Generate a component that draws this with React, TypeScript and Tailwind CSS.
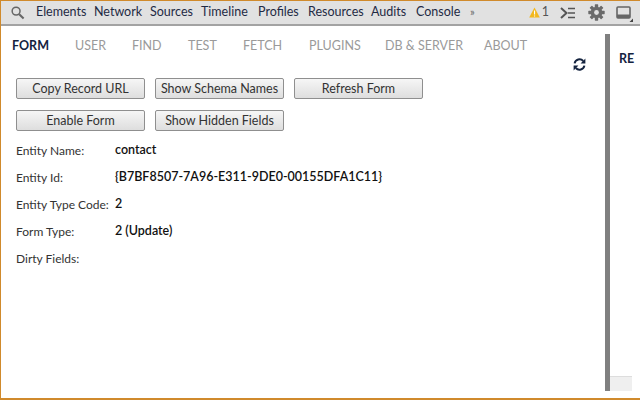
import { useState } from "react";

const navItems = [
  { label: "Elements", width: "w-[58px]" },
  { label: "Network", width: "w-[56px]" },
  { label: "Sources", width: "w-[51px]" },
  { label: "Timeline", width: "w-[57px]" },
  { label: "Profiles", width: "w-[50px]" },
  { label: "Resources", width: "w-[63px]" },
  { label: "Audits", width: "w-[45px]" },
  { label: "Console", width: "w-[54px]" },
];

const tabs = [
  { label: "FORM", width: "w-[63px]" },
  { label: "USER", width: "w-[57px]" },
  { label: "FIND", width: "w-[56px]" },
  { label: "TEST", width: "w-[55px]" },
  { label: "FETCH", width: "w-[66px]" },
  { label: "PLUGINS", width: "w-[76px]" },
  { label: "DB & SERVER", width: "w-[99px]" },
  { label: "ABOUT", width: "w-[60px]" },
];

const fields = [
  { label: "Entity Name:", value: "contact" },
  { label: "Entity Id:", value: "{B7BF8507-7A96-E311-9DE0-00155DFA1C11}" },
  { label: "Entity Type Code:", value: "2" },
  { label: "Form Type:", value: "2 (Update)" },
  { label: "Dirty Fields:", value: "" },
];

function FormButton({ children }: { children: string }) {
  return (
    <button className="h-[21px] w-[129px] rounded-[2px] border border-[#8f8f8f] bg-gradient-to-b from-[#f6f6f6] to-[#dedede] text-center text-[12.5px] leading-[19px] text-[#333]">
      {children}
    </button>
  );
}

function SearchIcon() {
  return (
    <svg width="15" height="15" viewBox="0 0 16 16" fill="none" stroke="#666" className="shrink-0">
      <circle cx="6.5" cy="6.5" r="4.2" strokeWidth="1.6" />
      <path d="M9.8 9.8 14.5 14.5" strokeWidth="2.2" />
    </svg>
  );
}

function WarningIcon() {
  return (
    <svg width="11" height="11" viewBox="0 0 11 11" className="shrink-0">
      <path d="M5.5.5 10.8 10.5H.2Z" fill="#f2b81f" />
      <path d="M5 3.5h1.1v4H5ZM5 8.4h1.1v1.2H5Z" fill="#fff" />
    </svg>
  );
}

function DrawerIcon() {
  return (
    <svg width="16" height="12" viewBox="0 0 16 12" fill="none" stroke="#555" className="shrink-0">
      <path d="M1 1 6.5 6 1 11" strokeWidth="2" />
      <path d="M8 1.5h7M8 6h7M8 10.5h7" strokeWidth="1.6" />
    </svg>
  );
}

function GearIcon() {
  return (
    <svg width="17" height="17" viewBox="0 0 17 17" className="shrink-0">
      <g fill="#6a6a6a">
        <circle cx="8.5" cy="8.5" r="5.8" />
        <rect x="6.8" y="0.3" width="3.4" height="16.4" rx="0.6" />
        <rect x="6.8" y="0.3" width="3.4" height="16.4" rx="0.6" transform="rotate(45 8.5 8.5)" />
        <rect x="6.8" y="0.3" width="3.4" height="16.4" rx="0.6" transform="rotate(90 8.5 8.5)" />
        <rect x="6.8" y="0.3" width="3.4" height="16.4" rx="0.6" transform="rotate(135 8.5 8.5)" />
      </g>
      <circle cx="8.5" cy="8.5" r="2.4" fill="#e0e0e0" />
    </svg>
  );
}

function DockIcon() {
  return (
    <svg width="17" height="18" viewBox="0 0 17 18" className="shrink-0">
      <rect x="1" y="3" width="13" height="11" rx="1" fill="none" stroke="#666" strokeWidth="1.6" />
      <rect x="1" y="10.5" width="13" height="3.5" fill="#666" />
      <path d="M17 14.5V18H13.5Z" fill="#444" />
    </svg>
  );
}

function RefreshIcon() {
  return (
    <svg width="13" height="13" viewBox="0 0 13 13" fill="none" className="shrink-0">
      <path d="M1.6 5.4A5 5 0 0 1 10.2 3" stroke="#14233f" strokeWidth="2" />
      <path d="M11.4 7.6A5 5 0 0 1 2.8 10" stroke="#14233f" strokeWidth="2" />
      <path d="M12.4 .6V5.4H7.6Z" fill="#14233f" />
      <path d="M.6 12.4V7.6H5.4Z" fill="#14233f" />
    </svg>
  );
}

export default function App() {
  const [active] = useState("FORM");

  return (
    <div className="flex h-[400px] w-[640px] flex-col overflow-hidden border-t border-b-2 border-l border-[#d08a2c] bg-white font-['Lato','Noto_Sans',sans-serif] text-[12.5px] text-[#222]">
      <div className="flex h-[25px] shrink-0 items-center border-b-2 border-[#a3a3a3] bg-[#e1e1e1] pl-[9px]">
        <SearchIcon />
        <div className="ml-[11px] flex items-center text-[12.5px] text-[#1f2a44]">
          {navItems.map((item) => (
            <span key={item.label} className={item.width}>{item.label}</span>
          ))}
        </div>
        <span className="text-[11px] text-[#666]">»</span>
        <div className="ml-[54px]"><WarningIcon /></div>
        <span className="ml-[2px] text-[12.5px] text-[#555]">1</span>
        <div className="ml-[11px]"><DrawerIcon /></div>
        <div className="ml-[12px]"><GearIcon /></div>
        <div className="ml-[11px]"><DockIcon /></div>
      </div>

      <div className="flex min-h-0 flex-1 pb-[7px] pt-[8px]">
        <div className="flex w-[604px] flex-col pl-[11px]">
          <div className="flex h-[24px] items-center">
            {tabs.map((tab) => (
              <span
                key={tab.label}
                className={`${tab.width} text-[12.5px] ${tab.label === active ? "font-bold text-[#14233f]" : "text-[#9a9a9a]"}`}
              >
                {tab.label}
              </span>
            ))}
          </div>
          <div className="flex justify-end pr-[19px]">
            <RefreshIcon />
          </div>
          <div className="mt-[7px] flex flex-col gap-[11px] pl-[4px]">
            <div className="flex gap-[10px]">
              <FormButton>Copy Record URL</FormButton>
              <FormButton>Show Schema Names</FormButton>
              <FormButton>Refresh Form</FormButton>
            </div>
            <div className="flex gap-[10px]">
              <FormButton>Enable Form</FormButton>
              <FormButton>Show Hidden Fields</FormButton>
            </div>
          </div>
          <div className="mt-[6px] flex flex-col pl-[4px]">
            {fields.map((field) => (
              <div key={field.label} className="flex h-[27px] items-center text-[12px]">
                <span className="w-[99px] text-[#333]">{field.label}</span>
                <span className="text-[12.5px] font-semibold text-[#111]">{field.value}</span>
              </div>
            ))}
          </div>
        </div>
        <div className="w-[5px] shrink-0 bg-[#808080]" />
        <div className="flex flex-1 flex-col justify-between">
          <div className="pl-[9px] pt-[16px] text-[12.5px] font-bold text-[#14233f]">RE</div>
          <div className="h-[15px] w-[22px] border-t border-[#ddd] bg-[#efefef]" />
        </div>
      </div>
    </div>
  );
}
